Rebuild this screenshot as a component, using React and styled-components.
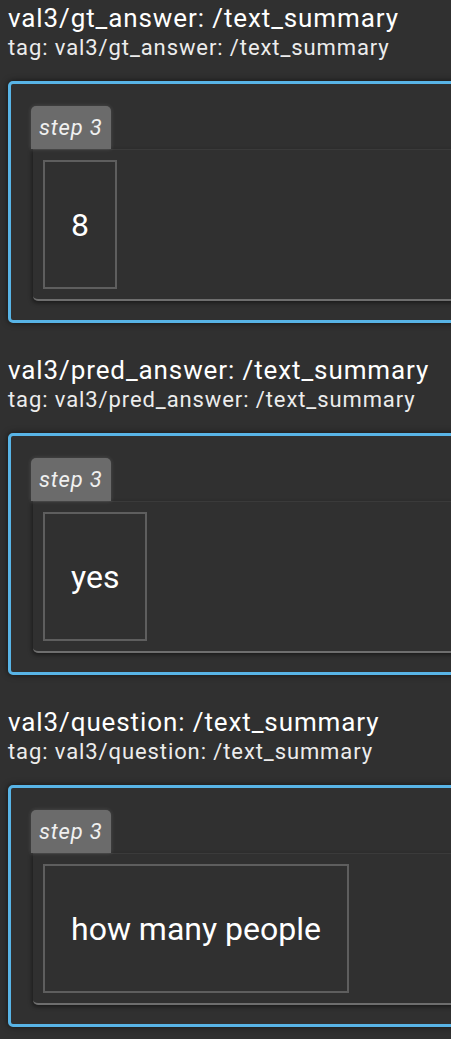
import React from 'react';
import styled, { createGlobalStyle } from 'styled-components';

const GlobalStyle = createGlobalStyle`
  html, body {
    margin: 0;
    padding: 0;
    overflow: hidden;
    background-color: #303030;
  }
  body {
    font-family: Roboto, "Liberation Sans", sans-serif;
    color: #ffffff;
  }
`;

const Page = styled.div`
  padding: 0 8px;
`;

const Section = styled.section`
  margin-bottom: 29px;
`;

const Title = styled.div`
  font-size: 26px;
  line-height: 30px;
  letter-spacing: 0.9px;
  padding-top: 3px;
  color: #ffffff;
  white-space: nowrap;
`;

const Subtitle = styled.div`
  font-size: 22px;
  line-height: 24px;
  letter-spacing: 0.9px;
  margin-top: 3px;
  color: #ececec;
  white-space: nowrap;
`;

const Card = styled.div`
  margin-top: 21px;
  width: 620px;
  border: 3px solid #58b4e6;
  border-radius: 5px;
  padding: 22px 20px 19px 21px;
  box-shadow: 0 0 6px rgba(0, 0, 0, 0.6);
`;

const StepTab = styled.div`
  display: inline-block;
  height: 43px;
  line-height: 43px;
  padding: 0 8px;
  margin-left: -1px;
  background-color: #6b6b6b;
  border-radius: 5px 5px 0 0;
  font-size: 22px;
  font-style: italic;
  letter-spacing: 0.8px;
  color: #f0f0f0;
  box-shadow: 0 0 4px rgba(255, 255, 255, 0.15);
  position: relative;
  z-index: 1;
`;

const Panel = styled.div`
  display: flex;
  align-items: flex-start;
  padding: 10px;
  border-top: 1px solid #3a3a3a;
  border-bottom: 2px solid #6e6e6e;
  border-radius: 0 0 0 5px;
  box-shadow: -1px 2px 4px rgba(0, 0, 0, 0.45);
  margin-left: 1px;
`;

const TextBox = styled.div`
  display: flex;
  align-items: center;
  height: 125px;
  padding: 0 26px;
  border: 2px solid #5e5e5e;
  font-size: 32px;
  color: #ffffff;
  white-space: nowrap;
`;

const summaries = [
  { tag: 'val3/gt_answer', value: '8' },
  { tag: 'val3/pred_answer', value: 'yes' },
  { tag: 'val3/question', value: 'how many people' },
];

const Summary = ({ tag, value }) => (
  <Section>
    <Title>{tag}: /text_summary</Title>
    <Subtitle>tag: {tag}: /text_summary</Subtitle>
    <Card>
      <StepTab>step 3</StepTab>
      <Panel>
        <TextBox>{value}</TextBox>
      </Panel>
    </Card>
  </Section>
);

const App = () => (
  <Page>
    <GlobalStyle />
    {summaries.map((s) => (
      <Summary key={s.tag} tag={s.tag} value={s.value} />
    ))}
  </Page>
);

export default App;
